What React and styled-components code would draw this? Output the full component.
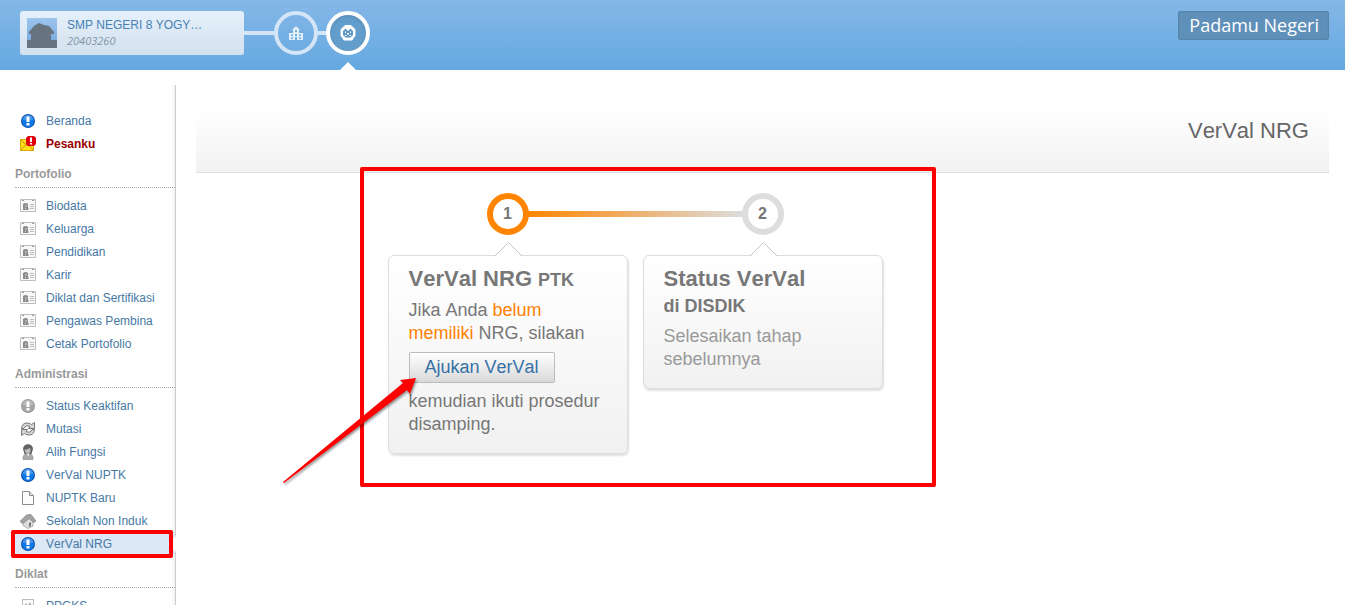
import {useState} from "react";
import styled, {createGlobalStyle, css} from "styled-components";

const GlobalStyle = createGlobalStyle`
  * {
    box-sizing: border-box;
  }
  body {
    margin: 0;
    background: #fff;
    color: #777;
    font-family: "Liberation Sans", Arial, sans-serif;
    font-size: 12px;
    font-kerning: none;
  }
  a {
    text-decoration: none;
  }
`

const Page = styled.div`
  height: 100vh;
  display: flex;
  flex-direction: column;
  overflow: hidden;
`

/* header */

const Header = styled.header`
  flex: none;
  height: 70px;
  padding: 11px 16px 0 20px;
  display: flex;
  justify-content: space-between;
  align-items: flex-start;
  background: linear-gradient(#85b7e8, #64a9e0);
`

const Trail = styled.nav`
  display: flex;
  align-items: center;
`

const SchoolCard = styled.a`
  width: 224px;
  height: 44px;
  padding: 0 7px;
  display: flex;
  align-items: center;
  gap: 10px;
  border-radius: 3px;
  background: linear-gradient(#e5f0fa, #d3e1ee);
`

const SchoolName = styled.div`
  color: #4682b4;
  line-height: 16px;
`

const SchoolCode = styled.div`
  color: #8496a5;
  font-family: "Open Sans", sans-serif;
  font-size: 11px;
  font-style: italic;
  line-height: 16px;
`

const Connector = styled.span`
  width: ${props => props.$short ? '8px' : '30px'};
  height: 4px;
  background: #d3e5f6;
`

const TrailCircle = styled.a`
  position: relative;
  width: 44px;
  height: 44px;
  display: flex;
  align-items: center;
  justify-content: center;
  border-radius: 50%;
  border: 4px solid ${props => props.$active ? '#fff' : '#d3e5f6'};
  background: ${props => props.$active ? '#639dcc' : 'transparent'};
  box-shadow: ${props => props.$active ? 'inset 0 1px 3px rgba(0, 0, 0, 0.15)' : 'none'};

  ${props => props.$active && css`
    &::after {
      content: "";
      position: absolute;
      left: 10px;
      top: 47px;
      border: 8px solid transparent;
      border-top-width: 0;
      border-bottom-color: #fff;
    }
  `}
`

const Brand = styled.a`
  padding: 0 10px 1px 11px;
  border-radius: 3px;
  background: #5f90b9;
  box-shadow: inset 0 0 2px rgba(0, 0, 0, 0.3);
  color: #fff;
  font-family: "Open Sans", sans-serif;
  font-size: 18px;
  line-height: 28px;
`

/* sidebar */

const Body = styled.div`
  flex: 1;
  min-height: 0;
  display: flex;
`

const Sidebar = styled.aside`
  flex: none;
  width: 176px;
  margin-top: 15px;
  padding: 24px 0 0 15px;
  border-right: 1px solid #ccc;
  background: linear-gradient(to left, #f2f2f2, #fff 4px);
`

const GroupTitle = styled.h2`
  margin: 0 0 6px;
  padding: 11px 0 4px;
  border-bottom: 1px dotted #aaa;
  color: #999;
  font-size: 12px;
  line-height: 17px;
`

const MenuList = styled.ul`
  margin: 0;
  padding: 0;
  list-style: none;
`

const MenuLink = styled.a`
  position: relative;
  display: flex;
  align-items: center;
  gap: 10px;
  height: 23px;
  padding-left: 5px;
  color: ${props => props.$alert ? '#990000' : '#4578a4'};
  font-weight: ${props => props.$alert ? 'bold' : 'normal'};
  background: ${props => props.$active ? '#dce8f6' : 'transparent'};

  &:hover {
    background: #dce8f6;
  }

  svg {
    flex: none;
  }

  ${props => props.$active && css`
    &::after {
      content: "";
      position: absolute;
      right: -1px;
      top: 4px;
      border: 8px solid transparent;
      border-left-width: 0;
      border-right-color: #fff;
    }
  `}
`

const Marker = styled.span`
  position: absolute;
  z-index: 1;
  border: 4px solid #fe0000;
  border-radius: 2px;
  pointer-events: none;
`

const MenuMarker = styled(Marker)`
  left: -4px;
  right: 2px;
  top: -2px;
  bottom: -3px;
`

/* content */

const Content = styled.main`
  flex: 1;
  min-width: 0;
  padding: 40px 16px 0 20px;
`

const PageTitle = styled.h1`
  margin: 0;
  padding: 8px 20px 28px;
  border-bottom: 1px solid #ddd;
  background: linear-gradient(#fff, #f2f2f2);
  color: #666;
  font-size: 22px;
  font-weight: normal;
  line-height: 26px;
  text-align: right;
`

const Steps = styled.div`
  position: relative;
  display: grid;
  grid-template-columns: repeat(3, 240px);
  column-gap: 15px;
  align-items: start;
  width: 750px;
  margin: 0 auto;
  padding-top: 20px;
`

const Step = styled.section`
  position: relative;
  display: flex;
  flex-direction: column;
  align-items: center;
  gap: 20px;
`

const StepNumber = styled.div`
  width: 42px;
  height: 42px;
  border: 6px solid ${props => props.$active ? '#ff8500' : '#ddd'};
  border-radius: 50%;
  background: #fff;
  font-size: 16px;
  font-weight: bold;
  line-height: 30px;
  text-align: center;
`

const StepLine = styled.div`
  position: absolute;
  left: 140px;
  top: 18px;
  width: 215px;
  height: 6px;
  background: linear-gradient(to right, #ff8500, #ddd);
`

const Card = styled.div`
  position: relative;
  width: 100%;
  padding: 9px 20px 17px;
  border: 1px solid #ddd;
  border-radius: 6px;
  background: linear-gradient(#fff, #f1f1f1);
  box-shadow: 1px 2px 2px rgba(0, 0, 0, 0.12);
  font-size: 18px;
  line-height: 23px;
`

const Pointer = styled.svg`
  position: absolute;
  left: 105px;
  top: -15px;
`

const CardTitle = styled.h3`
  margin: 0 0 6px;
  color: #777;
  font-size: 22px;
  line-height: 28px;

  small {
    font-size: 18px;
    line-height: 18px;
  }
`

const CardSubtitle = styled.span`
  display: block;
  font-size: 18px;
  line-height: 26px;
`

const CardText = styled.p`
  margin: 0;
  color: ${props => props.$muted ? '#999' : '#777'};
`

const Highlight = styled.span`
  color: #ff8000;
`

const SubmitButton = styled.button`
  display: block;
  height: 31px;
  margin: 7px 0;
  padding: 0 15px;
  border: 1px solid #bbb;
  border-radius: 2px;
  background: linear-gradient(#fff, #d9d9d9);
  color: #3671a5;
  font: inherit;
  font-kerning: none;
  line-height: 29px;
  cursor: pointer;
`

const StepsMarker = styled(Marker)`
  left: -28px;
  top: -6px;
  width: 576px;
  height: 320px;
`

const Arrow = styled.svg`
  position: absolute;
  z-index: 2;
  left: -108px;
  top: 201px;
  pointer-events: none;
  filter: drop-shadow(1px 2px 1px rgba(0, 0, 0, 0.4));
`

/* icons */

const InfoIcon = ({gray}) => (
  <svg width="16" height="16" viewBox="0 0 16 16">
    <circle cx="8" cy="8" r="7" fill={gray ? "#999" : "#0b4fae"}/>
    <circle cx="8" cy="8" r="6" fill={gray ? "#a6a6a6" : "#0f78e6"}/>
    <path d="M2.6 6.5a5.5 5.5 0 0 1 10.8 0q-5.4 2-10.8 0z" fill="#fff" opacity="0.22"/>
    <path d="M6.500 3.500h3v5.500h-3zM6.500 10h3v2.500h-3z" fill="#fff"/>
  </svg>
)

const MailIcon = () => (
  <svg width="16" height="16" viewBox="0 0 16 16">
    <path d="M.5 3.500h13v11H.5z" fill="#ffe01a" stroke="#dba800"/>
    <path d="M1 4l6 6 6-6M1 14l4.500-5M13 14L8.500 9" fill="none" stroke="#c99300"/>
    <path d="M8 0h6l2 2v6l-2 2H8L6 8V2z" fill="#e0000f"/>
    <path d="M10 1.500h2V6h-2zM10 7h2v1.500h-2z" fill="#fff"/>
  </svg>
)

const CardIcon = () => (
  <svg width="16" height="16" viewBox="0 0 16 16">
    <path d="M.5 1.500h15v12H.5z" fill="#f8f8f8" stroke="#bdbdbd"/>
    <path d="M2 2h2v1H2zM12 2h2v1h-2z" fill="#999"/>
    <path d="M3 6q2.500-2 5 0v3.500l.5.500v2H3z" fill="#8b8b8b"/>
    <path d="M5 7.500h2v1H5zM5 10h1v1H5z" fill="#d5d5d5"/>
    <path d="M10 6.500h4M10 8.500h4M10 10.500h4" stroke="#bbb"/>
  </svg>
)

const SyncIcon = () => (
  <svg width="16" height="16" viewBox="0 0 16 16" fill="#d6d6d6" stroke="#777" strokeLinejoin="round">
    <path d="M1.500 7.500Q2 2 7 2q3 0 4.500 1.500L14.500 1.500v6h-6l1.500-2Q5.500 3.500 4 7.500z"/>
    <path d="M14.500 8.500Q14 14 9 14q-3 0-4.500-1.500L1.500 14.500v-6h6L6 10.500q4.500 2 6-2z"/>
  </svg>
)

const PersonIcon = () => (
  <svg width="16" height="16" viewBox="0 0 16 16">
    <path d="M3 15.500q-.5-5 3-5.500h4q3.500.5 3 5.500z" fill="#aaa" stroke="#888" strokeWidth="0.600"/>
    <path d="M6.500 9.500h3L8.500 13z" fill="#e0e0e0"/>
    <path d="M3 5C3-1.500 13-1.500 13 5l-1.500 5h-7z" fill="#636363"/>
    <path d="M4.500 5.500q4 0 5-2L10.500 5q0 5-2.500 5T4.500 5.500z" fill="#bbb"/>
  </svg>
)

const FileIcon = () => (
  <svg width="16" height="16" viewBox="0 0 16 16" fill="#fcfcfc" stroke="#8d8d8d">
    <path d="M2.500 1.500h7l4 4v9h-11z"/>
    <path d="M9.500 1.500v4h4" fill="#ddd"/>
  </svg>
)

const HouseIcon = () => (
  <svg width="16" height="16" viewBox="0 0 16 16">
    <path d="M3 8l4-3 6 3v5l-5 2.500-5-3z" fill="#dedede" stroke="#999" strokeWidth="0.700"/>
    <path d="M0 8.500L6.500 2 11 1.500 16 8l-2.500 1.500L9.500 5 3 10.500z" fill="#a3a3a3" stroke="#7d7d7d" strokeWidth="0.700"/>
    <path d="M9 10l2-.8v4L9 14z" fill="#777"/>
  </svg>
)

const ImageIcon = () => (
  <svg width="16" height="16" viewBox="0 0 16 16">
    <path d="M2.500 1.500h11v12h-11z" fill="#fafafa" stroke="#bbb"/>
    <path d="M4 9l2-4 2 3 2-4 2 5z" fill="#a5a5a5"/>
  </svg>
)

const SchoolAvatar = () => (
  <svg width="30" height="30" viewBox="0 0 30 30">
    <defs>
      <linearGradient id="sky" x2="0" y2="1">
        <stop stopColor="#9cc5ee"/>
        <stop offset="1" stopColor="#70a5d8"/>
      </linearGradient>
    </defs>
    <path d="M0 0h30v30H0z" fill="url(#sky)"/>
    <path d="M0 30v-8h4v-6H2v-2l5-6 5-3 5 2 5 1 5 6v2h-3v6h6v8z" fill="#67737f"/>
  </svg>
)

const BuildingIcon = () => (
  <svg width="14" height="14" viewBox="0 0 14 14" fill="#e1eefa" fillRule="evenodd">
    <path d="M7 0l4 4h-1v3h4v7H0V7h4V4H3zM6 4v2h2V4zM2 8.500v1.500h2V8.500zM6 8v2h2V8zM10 8.500v1.500h2V8.500zM2 11.500V13h2v-1.500zM6 11v3h2v-3zM10 11.500V13h2v-1.500z"/>
  </svg>
)

const FaceIcon = () => (
  <svg width="16" height="16" viewBox="0 0 16 16">
    <path d="M5 .500h6l4 4v6L12 15H4L1 10.500v-6z" fill="#fff" stroke="#fff" strokeLinejoin="round"/>
    <path d="M5.500 3.500L8 6l2.500-2.500L13 6v4l-2.500 2.500h-5L3 10V6z" fill="#5f98c6"/>
    <path d="M5 6.500h1V8H5zM10 6.500h1V8h-1zM7 8h2v1.500H7zM5 10h1.500v1H5zM9.500 10H11v1H9.500z" fill="#fff"/>
  </svg>
)

const groups = [
  {
    items: [
      {label: "Beranda", icon: <InfoIcon/>},
      {label: "Pesanku", icon: <MailIcon/>, alert: true},
    ],
  },
  {
    title: "Portofolio",
    items: [
      {label: "Biodata", icon: <CardIcon/>},
      {label: "Keluarga", icon: <CardIcon/>},
      {label: "Pendidikan", icon: <CardIcon/>},
      {label: "Karir", icon: <CardIcon/>},
      {label: "Diklat dan Sertifikasi", icon: <CardIcon/>},
      {label: "Pengawas Pembina", icon: <CardIcon/>},
      {label: "Cetak Portofolio", icon: <CardIcon/>},
    ],
  },
  {
    title: "Administrasi",
    items: [
      {label: "Status Keaktifan", icon: <InfoIcon gray/>},
      {label: "Mutasi", icon: <SyncIcon/>},
      {label: "Alih Fungsi", icon: <PersonIcon/>},
      {label: "VerVal NUPTK", icon: <InfoIcon/>},
      {label: "NUPTK Baru", icon: <FileIcon/>},
      {label: "Sekolah Non Induk", icon: <HouseIcon/>},
      {label: "VerVal NRG", icon: <InfoIcon/>, marked: true},
    ],
  },
  {
    title: "Diklat",
    items: [
      {label: "PPGKS", icon: <ImageIcon/>},
    ],
  },
]

const CardPointer = () => (
  <Pointer width="30" height="16" viewBox="0 0 30 16">
    <path d="M1 16L14.500 1.500 28 16z" fill="#fff"/>
    <path d="M1 15L14.500 1.500 28 15" fill="none" stroke="#c4c4c4"/>
  </Pointer>
)

const App = () => {
  const [active, setActive] = useState("VerVal NRG")
  return (
    <Page>
      <GlobalStyle/>
      <Header>
        <Trail>
          <SchoolCard href="#sekolah">
            <SchoolAvatar/>
            <div>
              <SchoolName>SMP NEGERI 8 YOGY…</SchoolName>
              <SchoolCode>20403260</SchoolCode>
            </div>
          </SchoolCard>
          <Connector/>
          <TrailCircle href="#gedung" aria-label="Sekolah"><BuildingIcon/></TrailCircle>
          <Connector $short/>
          <TrailCircle href="#ptk" aria-label="PTK" $active><FaceIcon/></TrailCircle>
        </Trail>
        <Brand href="#padamu">Padamu Negeri</Brand>
      </Header>
      <Body>
        <Sidebar>
          {groups.map((group, i) => (
            <nav key={i}>
              {group.title && <GroupTitle>{group.title}</GroupTitle>}
              <MenuList>
                {group.items.map(item => (
                  <li key={item.label}>
                    <MenuLink
                      href="#menu"
                      $alert={item.alert}
                      $active={active === item.label}
                      onClick={() => setActive(item.label)}
                    >
                      {item.icon}
                      {item.label}
                      {item.marked && <MenuMarker/>}
                    </MenuLink>
                  </li>
                ))}
              </MenuList>
            </nav>
          ))}
        </Sidebar>
        <Content>
          <PageTitle>VerVal NRG</PageTitle>
          <Steps>
            <Step>
              <StepLine/>
              <StepNumber $active>1</StepNumber>
              <Card>
                <CardPointer/>
                <CardTitle>VerVal NRG <small>PTK</small></CardTitle>
                <CardText>Jika Anda <Highlight>belum memiliki</Highlight> NRG, silakan</CardText>
                <SubmitButton type="button">Ajukan VerVal</SubmitButton>
                <CardText>kemudian ikuti prosedur disamping.</CardText>
              </Card>
            </Step>
            <Step>
              <StepNumber>2</StepNumber>
              <Card>
                <CardPointer/>
                <CardTitle>Status VerVal<CardSubtitle>di DISDIK</CardSubtitle></CardTitle>
                <CardText $muted>Selesaikan tahap sebelumnya</CardText>
              </Card>
            </Step>
            <StepsMarker/>
            <Arrow width="140" height="116" viewBox="0 0 140 116">
              <path d="M136 4L120 6l3 3L3 108l1 1L127 16l3 4z" fill="#fe0000"/>
            </Arrow>
          </Steps>
        </Content>
      </Body>
    </Page>
  )
}

export default App
